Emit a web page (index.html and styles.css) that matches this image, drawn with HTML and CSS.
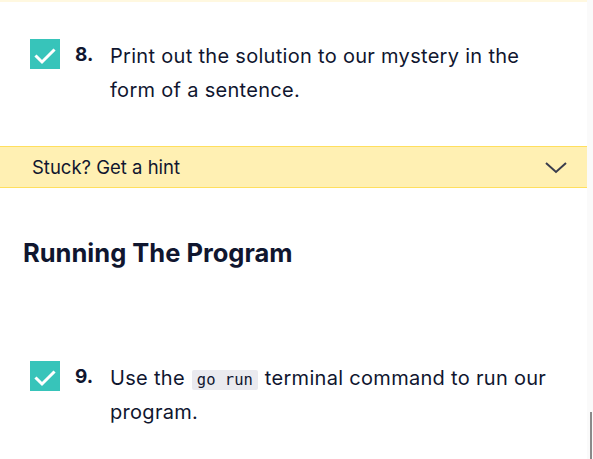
FILE: index.html
```html
<!DOCTYPE html>
<html>
<head>
<meta charset="utf-8">
<link rel="stylesheet" href="styles.css">
</head>
<body>
<div class="page">
  <div class="content">
    <div class="topline"></div>
    <div class="task task-first">
      <span class="check"><svg width="30" height="30" viewBox="0 0 30 30"><polyline points="6.5,17.5 12,23 23.5,11.5" fill="none" stroke="#fff" stroke-width="3" stroke-linecap="square"/></svg></span>
      <span class="num">8.</span>
      <p class="text">Print out the solution to our mystery in the form of a sentence.</p>
    </div>
    <div class="hint">
      <span>Stuck? Get a hint</span>
      <svg class="chev" width="22" height="12" viewBox="0 0 22 12"><polyline points="1,1 11,10 21,1" fill="none" stroke="#3a3d4d" stroke-width="2"/></svg>
    </div>
    <h2 class="heading">Running The Program</h2>
    <div class="task task-second">
      <span class="check"><svg width="30" height="30" viewBox="0 0 30 30"><polyline points="6.5,17.5 12,23 23.5,11.5" fill="none" stroke="#fff" stroke-width="3" stroke-linecap="square"/></svg></span>
      <span class="num">9.</span>
      <p class="text">Use the<code>go run</code>terminal command to run our program.</p>
    </div>
  </div>
  <div class="rail"><div class="thumb"></div></div>
</div>
</body>
</html>
```

FILE: styles.css
```css
html, body {
  margin: 0;
  padding: 0;
  background: #fff;
}
body {
  font-family: "Inter", "Liberation Sans", sans-serif;
  color: #10162f;
}
.page {
  display: flex;
  width: 593px;
  height: 459px;
  overflow: hidden;
}
.content {
  width: 587px;
  flex: none;
}
.rail {
  width: 6px;
  background: #fafafa;
  display: flex;
  flex-direction: column;
  align-items: flex-end;
  justify-content: flex-end;
}
.thumb {
  width: 2px;
  height: 47px;
  background: #8a8a8a;
  margin-right: 1px;
}
.topline {
  height: 2px;
  background: #fff8e0;
}
.task {
  display: flex;
  align-items: flex-start;
  padding-left: 30px;
}
.task-first {
  margin-top: 37px;
}
.task-second {
  margin-top: 90px;
}
.check {
  width: 30px;
  height: 30px;
  background: #37c4ba;
  flex: none;
  display: block;
}
.check svg {
  display: block;
}
.num {
  width: 35px;
  padding-left: 15px;
  font-weight: 700;
  font-size: 19px;
  line-height: 34px;
  margin-top: -1px;
  flex: none;
}
.text {
  margin: 0;
  font-size: 20px;
  line-height: 34px;
  letter-spacing: 0.3px;
  width: 445px;
}
code {
  display: inline-block;
  font-family: "DejaVu Sans Mono", monospace;
  font-size: 15.5px;
  line-height: 20px;
  letter-spacing: 0;
  color: #10162f;
  background: #eaeaef;
  border-radius: 2px;
  padding: 0 5px;
  margin: 0 7px;
}
.hint {
  margin-top: 39px;
  height: 40px;
  border-top: 1px solid #ffdf5e;
  border-bottom: 1px solid #ffdf5e;
  background: #fff0b3;
  display: flex;
  align-items: center;
  justify-content: space-between;
  padding: 0 20px 0 32px;
  font-size: 18.5px;
}
.chev {
  display: block;
  margin-top: 2px;
}
.heading {
  margin: 47px 0 0 23px;
  font-size: 25.5px;
  font-weight: 700;
  line-height: 36px;
}
```
